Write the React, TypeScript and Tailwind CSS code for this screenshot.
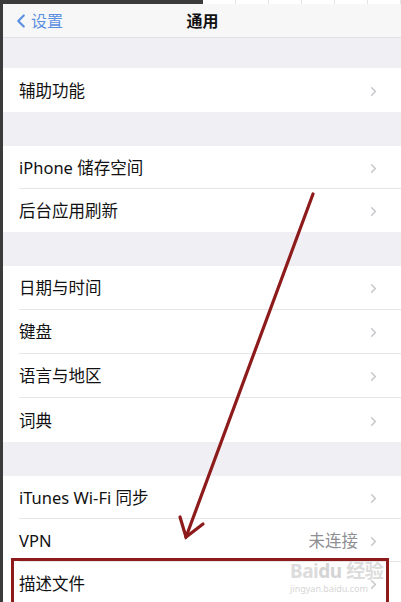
import { ChevronLeft, ChevronRight } from 'lucide-react';

type Row = { label: string; detail?: string };

const groups: { rows: Row[]; h: string }[] = [
  { rows: [{ label: '辅助功能' }], h: 'h-[44px]' },
  { rows: [{ label: 'iPhone 储存空间' }, { label: '后台应用刷新' }], h: 'h-[43px]' },
  {
    rows: [{ label: '日期与时间' }, { label: '键盘' }, { label: '语言与地区' }, { label: '词典' }],
    h: 'h-[44px]',
  },
  {
    rows: [{ label: 'iTunes Wi-Fi 同步' }, { label: 'VPN', detail: '未连接' }, { label: '描述文件' }],
    h: 'h-[43px]',
  },
];

function SettingsRow({ row, h, last }: { row: Row; h: string; last: boolean }) {
  return (
    <div className={`${h} flex items-center pl-[16px] bg-white`}>
      <div
        className={`flex-1 h-full flex items-center pt-[2px] pr-[20px] ${last ? '' : 'border-b border-[#e6e6ea]'}`}
      >
        <span className="flex-1 text-[16.5px] text-[#111]">{row.label}</span>
        {row.detail && <span className="text-[16.5px] text-[#8e8e93] mr-[8px]">{row.detail}</span>}
        <ChevronRight className="w-[15px] h-[15px] text-[#c4c4c9]" strokeWidth={2.2} />
      </div>
    </div>
  );
}

export default function App() {
  return (
    <div
      className="relative w-[401px] h-[602px] overflow-hidden bg-[#efeff4] border-l-[3px] border-[#3b3b3b]"
      style={{ fontFamily: '"Noto Sans", "Noto Sans CJK SC", sans-serif' }}
    >
      {/* strip of the window above */}
      <div className="flex h-[4px]">
        <div className="w-[202px] bg-[#3b3b3b]" />
        <div className="flex-1 bg-white flex">
          {[0, 1, 2, 3, 4, 5].map((i) => (
            <div key={i} className="w-[33px] border-r border-[#e4e4e4]" />
          ))}
        </div>
      </div>

      {/* nav bar */}
      <div className="h-[34px] relative flex items-center justify-center bg-[#f7f7f8] border-b border-[#e2e2e6]">
        <div className="absolute left-[7px] flex items-center text-[#5b8fe0]">
          <ChevronLeft className="w-[22px] h-[22px]" strokeWidth={2.4} />
          <span className="text-[16px] -ml-[1px]">设置</span>
        </div>
        <span className="text-[16px] font-semibold text-[#111] pl-[1px]">通用</span>
      </div>

      <div className="flex flex-col">
        {groups.map((g, gi) => (
          <div key={gi} className={gi === 0 ? 'pt-[30px]' : 'pt-[34px]'}>
            {g.rows.map((r, ri) => (
              <SettingsRow key={r.label} row={r} h={g.h} last={ri === g.rows.length - 1} />
            ))}
          </div>
        ))}
      </div>

      {/* watermark */}
      <div className="absolute left-[287px] top-[562px] flex flex-col items-start leading-none pointer-events-none">
        <span className="text-[19px] font-bold text-[#dcdcdc] tracking-tight">Bai<span className="text-[#d4d4d4]">du</span> 经验</span>
        <span className="text-[9px] text-[#d6d6d6] mt-[3px]">jingyan.baidu.com</span>
      </div>

      {/* annotation: arrow and highlight box */}
      <svg className="absolute left-0 top-0 pointer-events-none" width="401" height="602" viewBox="0 0 401 602">
        <g stroke="#8e1b1b" strokeWidth="3.2" strokeLinecap="round" fill="none">
          <line x1="310" y1="194" x2="183" y2="537" />
          <polyline points="177,517 183,537 200,524" />
        </g>
        <rect x="9.5" y="559.5" width="375" height="60" stroke="#8e1b1b" strokeWidth="3" fill="none" />
      </svg>
    </div>
  );
}
